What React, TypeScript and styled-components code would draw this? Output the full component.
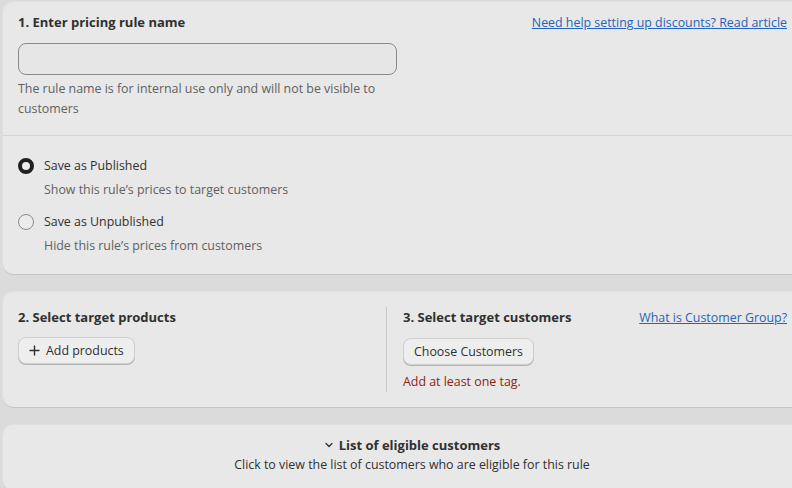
import React from 'react';
import styled, { createGlobalStyle } from 'styled-components';

const GlobalStyle = createGlobalStyle`
  html, body {
    margin: 0;
    padding: 0;
    background: #dbdbdb;
    overflow: hidden;
  }
  body {
    font-family: "Open Sans", "Noto Sans", sans-serif;
    font-size: 12.4px;
    color: #303030;
  }
`;

const Page = styled.div`
  display: flex;
  flex-direction: column;
  gap: 18px;
  padding: 2px 0 0 3px;
  width: 800px;
`;

const Card = styled.section`
  background: #e8e8e8;
  border-radius: 10px;
  box-shadow: 0 1px 0 #c4c4c4, 0 0 0 1px #e0e0e0;
  overflow: hidden;
`;

const Section = styled.div<{ $divider?: boolean }>`
  padding: ${(p) => (p.$divider ? '10px 16px 16px 15px' : '12px 16px 18px 15px')};
  border-bottom: ${(p) => (p.$divider ? '1px solid #d4d4d4' : 'none')};
`;

const HeaderRow = styled.div`
  display: flex;
  justify-content: space-between;
  align-items: baseline;
`;

const Title = styled.h2`
  margin: 0;
  font-size: 13px;
  font-weight: 700;
  line-height: 20px;
  color: #303030;
`;

const HelpLink = styled.a`
  color: #2463bc;
  text-decoration: underline;
  font-size: 12.4px;
  line-height: 20px;
  cursor: pointer;
`;

const NameInput = styled.input`
  display: block;
  box-sizing: border-box;
  width: 379px;
  height: 32px;
  margin-top: 10px;
  border: 1px solid #8a8a8a;
  border-radius: 8px;
  background: #e6e6e6;
  outline: none;
`;

const Help = styled.p`
  margin: 4px 0 0;
  width: 370px;
  line-height: 20px;
  color: #616161;
`;

const RadioList = styled.div`
  display: flex;
  flex-direction: column;
  gap: 12px;
  padding-top: 8px;
`;

const RadioOption = styled.label`
  display: grid;
  grid-template-columns: 16px 1fr;
  column-gap: 10px;
  row-gap: 4px;
  align-items: center;
`;

const RadioDot = styled.span<{ $checked?: boolean }>`
  box-sizing: border-box;
  width: 16px;
  height: 16px;
  border-radius: 50%;
  background: #ececec;
  border: ${(p) => (p.$checked ? '4px solid #202020' : '1px solid #8a8a8a')};
`;

const RadioLabel = styled.span`
  line-height: 20px;
  color: #303030;
`;

const RadioHint = styled.span`
  grid-column: 2;
  line-height: 20px;
  color: #616161;
`;

const TargetRow = styled.div`
  display: grid;
  grid-template-columns: 368px 1fr;
  padding: 15px 16px 15px 15px;
`;

const Column = styled.div<{ $split?: boolean }>`
  display: flex;
  flex-direction: column;
  gap: 10px;
  padding-left: ${(p) => (p.$split ? '16px' : '0')};
  border-left: ${(p) => (p.$split ? '1px solid #cacaca' : 'none')};
  min-height: 83px;
`;

const Button = styled.button`
  align-self: flex-start;
  display: inline-flex;
  align-items: center;
  gap: 6px;
  height: 27px;
  padding: 0 10px;
  font-family: inherit;
  font-size: 12.4px;
  color: #303030;
  background: #eeeeee;
  border: 1px solid #cfcfcf;
  border-radius: 8px;
  box-shadow: 0 1px 0 #b5b5b5;
  cursor: pointer;
`;

const ErrorText = styled.span`
  margin-top: -3px;
  color: #8e1f0b;
  line-height: 20px;
`;

const Eligible = styled.div`
  display: flex;
  flex-direction: column;
  align-items: center;
  padding: 10px 0 16px 18px;
`;

const EligibleTitle = styled.div`
  display: flex;
  align-items: center;
  gap: 5px;
  font-size: 13px;
  font-weight: 700;
  line-height: 20px;
  color: #303030;
`;

const EligibleHint = styled.div`
  line-height: 20px;
  color: #303030;
`;

const Plus = () => (
  <svg width="11" height="11" viewBox="0 0 11 11" aria-hidden>
    <path d="M5.5 1v9M1 5.5h9" stroke="#303030" strokeWidth="1.4" strokeLinecap="round" />
  </svg>
);

const Chevron = () => (
  <svg width="10" height="10" viewBox="0 0 10 10" aria-hidden>
    <path d="M2 3.5l3 3 3-3" fill="none" stroke="#303030" strokeWidth="1.3" strokeLinecap="round" strokeLinejoin="round" />
  </svg>
);

const App: React.FC = () => {
  return (
    <>
      <GlobalStyle />
      <Page>
        <Card>
          <Section $divider>
            <HeaderRow>
              <Title>1. Enter pricing rule name</Title>
              <HelpLink>Need help setting up discounts? Read article</HelpLink>
            </HeaderRow>
            <NameInput />
            <Help>The rule name is for internal use only and will not be visible to customers</Help>
          </Section>
          <Section>
            <RadioList>
              <RadioOption>
                <RadioDot $checked />
                <RadioLabel>Save as Published</RadioLabel>
                <RadioHint>Show this rule’s prices to target customers</RadioHint>
              </RadioOption>
              <RadioOption>
                <RadioDot />
                <RadioLabel>Save as Unpublished</RadioLabel>
                <RadioHint>Hide this rule’s prices from customers</RadioHint>
              </RadioOption>
            </RadioList>
          </Section>
        </Card>

        <Card>
          <TargetRow>
            <Column>
              <Title>2. Select target products</Title>
              <Button>
                <Plus />
                Add products
              </Button>
            </Column>
            <Column $split>
              <HeaderRow>
                <Title>3. Select target customers</Title>
                <HelpLink>What is Customer Group?</HelpLink>
              </HeaderRow>
              <Button>Choose Customers</Button>
              <ErrorText>Add at least one tag.</ErrorText>
            </Column>
          </TargetRow>
        </Card>

        <Card>
          <Eligible>
            <EligibleTitle>
              <Chevron />
              List of eligible customers
            </EligibleTitle>
            <EligibleHint>Click to view the list of customers who are eligible for this rule</EligibleHint>
          </Eligible>
        </Card>
      </Page>
    </>
  );
};

export default App;
